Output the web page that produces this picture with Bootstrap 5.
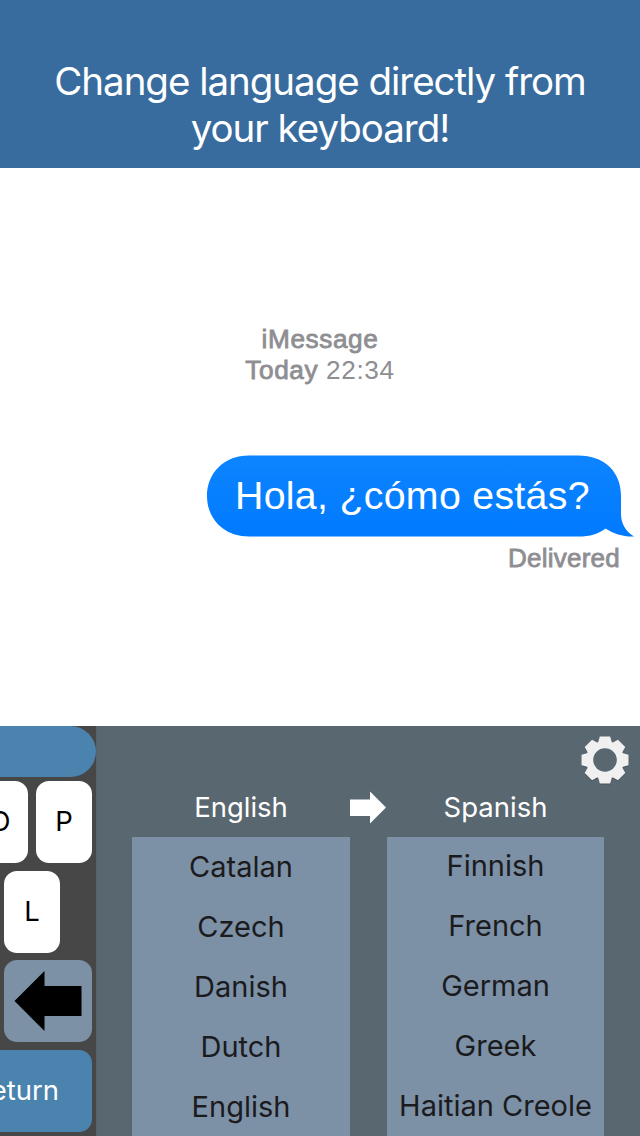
<!DOCTYPE html>
<html lang="en">
<head>
<meta charset="utf-8">
<meta name="viewport" content="width=device-width, initial-scale=1">
<title>Keyboard translator</title>
<link href="https://cdn.jsdelivr.net/npm/bootstrap@5.3.0/dist/css/bootstrap.min.css" rel="stylesheet">
<style>
  body { width: 640px; height: 1136px; font-family: Inter, "Liberation Sans", sans-serif; }
  .hero { height: 168px; padding-top: 58px; background: #396c9e; font-size: 38.5px; line-height: 47px; font-weight: 400; }
  .hero span { letter-spacing: -1.03px; }
  .chat { height: 558px; font-family: "Liberation Sans", sans-serif; color: #8e8e93; }
  .stamp { padding-top: 156px; font-size: 26.2px; line-height: 31px; letter-spacing: .6px; }
  .medium { -webkit-text-stroke: .8px currentColor; }
  .bubble { width: 427px; height: 82px; margin: 69px 6px 0 auto; }
  .bubble-text { font-size: 39.3px; line-height: 80px; padding-left: 28px; letter-spacing: .3px; }
  .delivered { font-size: 26px; line-height: 30px; margin: 6px 20px 0 0; letter-spacing: .25px; }
  .keyboard { height: 410px; background: #596770; }
  .keys { width: 97px; background: #474747; border-right: 1px solid #56626a; }
  .space-key { width: 96px; height: 51px; background: #4a83ae; border-radius: 0 26px 26px 0; }
  .keycap { height: 82px; border-radius: 13px; background: #fff; color: #000; font-size: 27.5px; flex: none; }
  .key-row { height: 82.5px; padding-right: 4px; }
  .key-row + .key-row { margin-top: 7px; }
  .letter-row { gap: 8px; }
  .w-letter { width: 56px; }
  .letter-l { margin-right: 32px; }
  .w-action { width: 88px; background: #7c90a6; }
  .w-return { width: 180px; background: #4a83ae; color: #fff; padding-right: 33px; font-size: 27.5px; }
  .gear-row { height: 54px; padding: 8px 10px 0 0; }
  .pair { height: 55px; margin-bottom: 2px; padding: 0 37px 0 35px; font-size: 27.5px; }
  .lang-label { width: 218px; }
  .label-to { width: 217px; }
  .pair-arrow { width: 37px; }
  .lists { height: 299px; padding: 0 37px 0 35px; gap: 37px; }
  .lang-list { width: 218px; background: #7c90a6; color: #1b1b1d; font-size: 29px; line-height: 60px; overflow: hidden; flex: none; }
  .lang-list div { height: 60px; white-space: nowrap; }
  .list-to { width: 217px; line-height: 57px; }
</style>
</head>
<body class="bg-white overflow-hidden">
  <header class="hero text-white text-center"><span>Change language directly from</span><br><span>your keyboard!</span></header>

  <main class="chat">
    <div class="stamp text-center">
      <div class="medium">iMessage</div>
      <div><span class="medium">Today</span> <span>22:34</span></div>
    </div>
    <div class="bubble position-relative">
      <svg class="position-absolute top-0 start-0" width="427" height="82" viewBox="0 0 427 82">
        <defs><linearGradient id="blue" x1="0" y1="0" x2="0" y2="1"><stop offset="0" stop-color="#0d84ff"/><stop offset="1" stop-color="#007aff"/></linearGradient></defs>
        <path fill="url(#blue)" d="M42 .5H371C398 .5 414 17 414 41V59C414 68 418 76 427 81.500C417 82 407 79 398.500 73.500C391 79 384 81.500 371 81.500H42C17 81.500 0 64 0 41S17 .5 42 .5Z"/>
      </svg>
      <div class="bubble-text position-relative text-white text-nowrap"><span>Hola, ¿cómo estás?</span></div>
    </div>
    <div class="delivered text-end"><span class="medium">Delivered</span></div>
  </main>

  <section class="keyboard d-flex">
    <div class="keys overflow-hidden flex-shrink-0">
      <div class="space-key mb-1"></div>
      <div class="key-row letter-row d-flex justify-content-end">
        <div class="keycap w-letter d-flex align-items-center justify-content-center">O</div>
        <div class="keycap w-letter d-flex align-items-center justify-content-center">P</div>
      </div>
      <div class="key-row d-flex justify-content-end">
        <div class="keycap w-letter letter-l d-flex align-items-center justify-content-center">L</div>
      </div>
      <div class="key-row d-flex justify-content-end">
        <div class="keycap w-action d-flex align-items-center justify-content-center">
          <svg width="68" height="62" viewBox="0 0 68 62"><path d="M.5 31L30.500 1V16H67.500V46H30.500V61Z"/></svg>
        </div>
      </div>
      <div class="key-row d-flex justify-content-end">
        <div class="keycap w-return d-flex align-items-center justify-content-end">return</div>
      </div>
    </div>

    <div class="flex-grow-1">
      <div class="gear-row d-flex justify-content-end">
        <svg width="52" height="52" viewBox="-26 -26 52 52">
          <defs><g id="teeth"><path id="tooth" d="M-7 -17L-5.200 -23.500H5.200L7 -17V17L5.200 23.500H-5.200L-7 17Z"/><use href="#tooth" transform="rotate(45)"/><use href="#tooth" transform="rotate(90)"/><use href="#tooth" transform="rotate(135)"/><circle r="19"/></g>
          <mask id="hole"><rect x="-26" y="-26" width="52" height="52" fill="#fff"/><circle r="11.800" fill="#000"/></mask></defs>
          <g mask="url(#hole)"><use href="#teeth" y="1" fill="#3d474d" opacity=".6"/><use href="#teeth" fill="#f0f0f0"/></g>
        </svg>
      </div>
      <div class="pair d-flex align-items-center text-white text-center">
        <div class="lang-label"><span>English</span></div>
        <svg class="pair-arrow" width="37" height="34" viewBox="0 0 37 34"><path fill="#fff" d="M0 8.500H20V.5L36 16.500L20 32.500V25H0Z"/></svg>
        <div class="label-to"><span>Spanish</span></div>
      </div>
      <div class="lists d-flex text-center">
        <div class="lang-list list-from"><div>Catalan</div><div>Czech</div><div>Danish</div><div>Dutch</div><div>English</div></div>
        <div class="lang-list list-to"><div>Finnish</div><div>French</div><div>German</div><div>Greek</div><div>Haitian Creole</div></div>
      </div>
    </div>
  </section>
<script src="https://cdn.jsdelivr.net/npm/bootstrap@5.3.0/dist/js/bootstrap.bundle.min.js"></script>
</body>
</html>
